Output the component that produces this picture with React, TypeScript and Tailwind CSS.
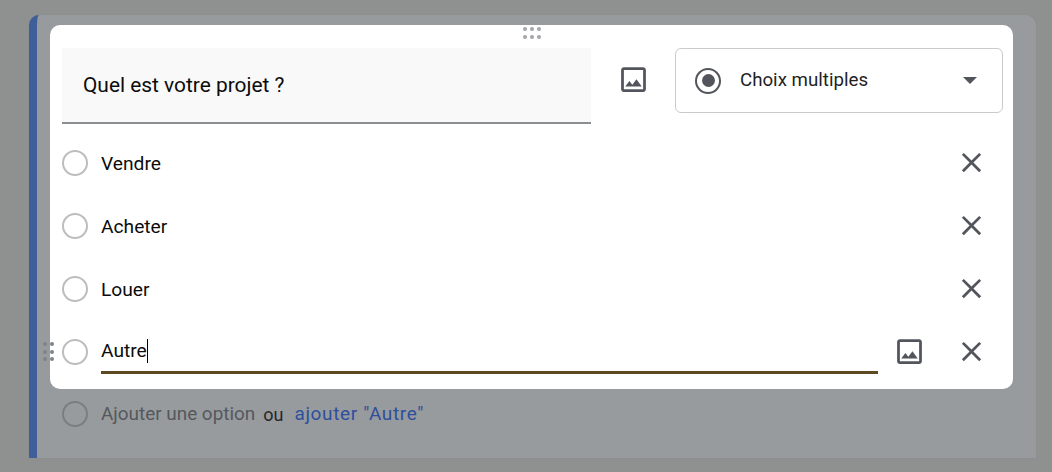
import React from 'react';

const IMAGE_PATH =
  'M19 5v14H5V5h14m0-2H5c-1.1 0-2 .9-2 2v14c0 1.1.9 2 2 2h14c1.1 0 2-.9 2-2V5c0-1.1-.9-2-2-2zm-4.86 8.86l-3 3.87L9 13.14 6 17h12l-3.86-5.14z';
const CLOSE_PATH =
  'M19 6.41L17.59 5 12 10.59 6.41 5 5 6.41 10.59 12 5 17.59 6.41 19 12 13.41 17.59 19 19 17.59 13.41 12z';

const Icon = ({ d }: { d: string }) => (
  <svg viewBox="0 0 24 24" className="w-[33px] h-[33px] fill-[#52555b]">
    <path d={d} />
  </svg>
);

const Radio = ({ dim }: { dim?: boolean }) => (
  <div
    className={`w-[26px] h-[26px] rounded-full border-[2.5px] shrink-0 ${
      dim ? 'border-[#7b7e81]' : 'border-[#bdbdbd]'
    }`}
  />
);

const Dots = ({ cols, rows, className, dot }: { cols: number; rows: number; className: string; dot: string }) => (
  <div
    className={`absolute grid gap-x-[3px] gap-y-[3.5px] ${className}`}
    style={{ gridTemplateColumns: `repeat(${cols}, 4px)` }}
  >
    {Array.from({ length: cols * rows }).map((_, i) => (
      <span key={i} className={`w-[4px] h-[4px] rounded-full ${dot}`} />
    ))}
  </div>
);

const OptionRow = ({ label }: { label: string }) => (
  <div className="flex items-center h-[63px] pl-3 pr-[25px]">
    <Radio />
    <span className="ml-[13px] pt-[3px] flex-1 text-[19.2px] text-[#0c0c0c]">{label}</span>
    <div className="-mt-[1px]">
      <Icon d={CLOSE_PATH} />
    </div>
  </div>
);

export default function App() {
  return (
    <div className="w-[1052px] h-[472px] overflow-hidden bg-[#8e9190] pt-[15px] pl-[29px] font-['Roboto',sans-serif]">
      <div className="relative w-[1007px] h-[443px] bg-[#979b9e] border-l-[8px] border-[#3f5e9a] rounded-t-[10px] pt-[10px] pl-[13px] shadow-[0_0_1px_#7d8083]">
        <div className="relative w-[963px] h-[364px] bg-white rounded-[10px] pt-[23px]">
          <Dots cols={3} rows={2} className="left-[473px] top-[2px]" dot="bg-[#a3a5a8]" />
          <div className="flex items-start pl-3 pr-[10px] h-[83px]">
            <div className="w-[529px] h-[76px] bg-[#f9f9f9] border-b-2 border-[#8c8f92] flex items-center pl-[21px] pt-[1px] text-[20.9px] text-[#0c0c0c]">
              Quel est votre projet ?
            </div>
            <div className="ml-[26px] mt-[15px]">
              <Icon d={IMAGE_PATH} />
            </div>
            <div className="ml-[25px] w-[328px] h-[65px] border border-[#c9cacc] rounded-[6px] flex items-center pl-[19px] pr-[25px]">
              <div className="w-[26px] h-[26px] rounded-full border-[2.5px] border-[#52555b] flex items-center justify-center">
                <div className="w-[13px] h-[13px] rounded-full bg-[#52555b]" />
              </div>
              <span className="ml-[19px] flex-1 text-[18.7px] text-[#1f1f1f]">Choix multiples</span>
              <div className="w-0 h-0 border-x-[7px] border-x-transparent border-t-[7px] border-t-[#52555b]" />
            </div>
          </div>
          <OptionRow label="Vendre" />
          <OptionRow label="Acheter" />
          <OptionRow label="Louer" />
          <div className="flex items-center h-[63px] pl-3">
            <Radio />
            <div className="ml-[13px] w-[777px] h-[46px] self-start mt-[8px] border-b-[3px] border-[#5d4a22] flex items-start pt-[11px]">
              <span className="text-[19.2px] text-[#0c0c0c] border-r border-black leading-[24px]">Autre</span>
            </div>
            <div className="ml-[15px] mr-[29px] -mt-[1px]">
              <Icon d={IMAGE_PATH} />
            </div>
            <div className="-mt-[1px]">
              <Icon d={CLOSE_PATH} />
            </div>
          </div>
        </div>
        <Dots cols={2} rows={3} className="left-[6px] top-[327px]" dot="bg-[#808386]" />
        <div className="flex items-center pl-[12px] mt-[11px]">
          <Radio dim />
          <span className="ml-[13px] text-[18.9px] text-[#55585c]">Ajouter une option</span>
          <span className="ml-[8px] text-[18px] text-[#25272a]">ou</span>
          <span className="ml-[11px] text-[19px] tracking-[0.65px] text-[#2f4f9c]">ajouter "Autre"</span>
        </div>
      </div>
    </div>
  );
}
